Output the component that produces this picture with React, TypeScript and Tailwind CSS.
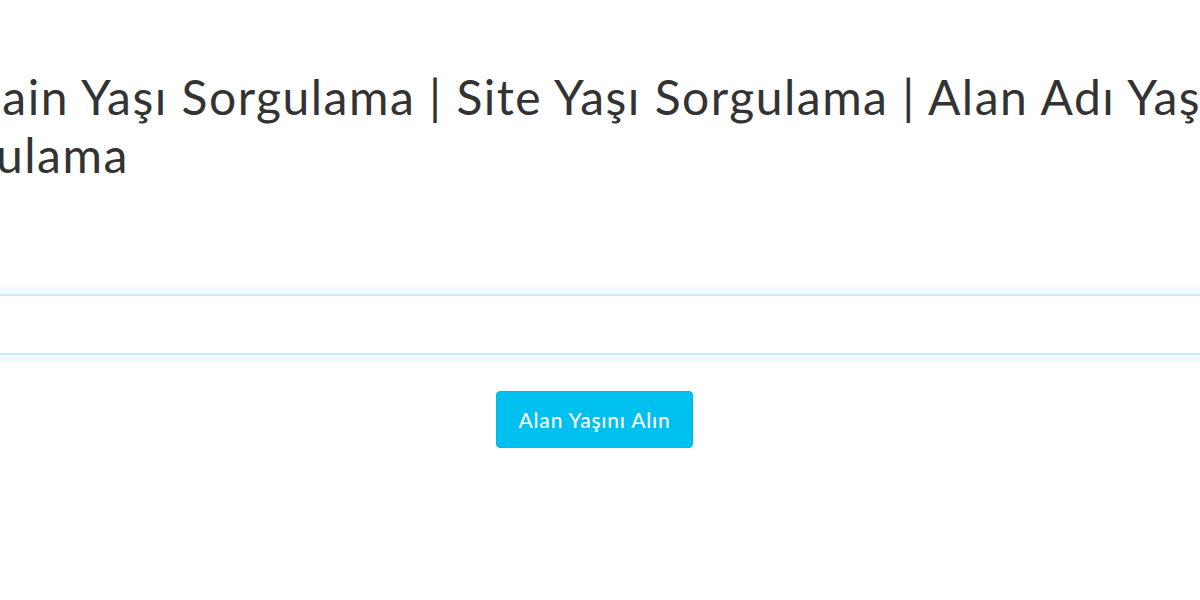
export default function App() {
  return (
    <div className="min-h-[600px] overflow-hidden bg-white text-[#333]" style={{ fontFamily: 'Lato, "Open Sans", sans-serif' }}>
      <div className="flex justify-center">
        <div className="w-[1440px] shrink-0 px-[15px] pt-[68px]">
          <h1 className="text-[48px] font-normal leading-[1.2] tracking-[1.5px]">
            Domain Yaşı Sorgulama | Site Yaşı Sorgulama | Alan Adı Yaşı Sorgulama
          </h1>

          <form className="mt-[111px] flex flex-col items-center" onSubmit={(e) => e.preventDefault()}>
            <input
              type="text"
              className="h-[61px] w-full rounded-[3px] border-2 border-[#c8e9f5] bg-white px-4 text-lg shadow-[0_0_0_7px_#f0fafd] outline-none"
            />
            <button
              type="submit"
              className="mr-[11px] mt-[36px] h-[57px] rounded-[4px] border border-[#00b8e6] bg-[#00c0ef] px-[21px] text-[21px] font-medium tracking-[0.8px] text-white"
            >
              Alan Yaşını Alın
            </button>
          </form>
        </div>
      </div>
    </div>
  )
}
